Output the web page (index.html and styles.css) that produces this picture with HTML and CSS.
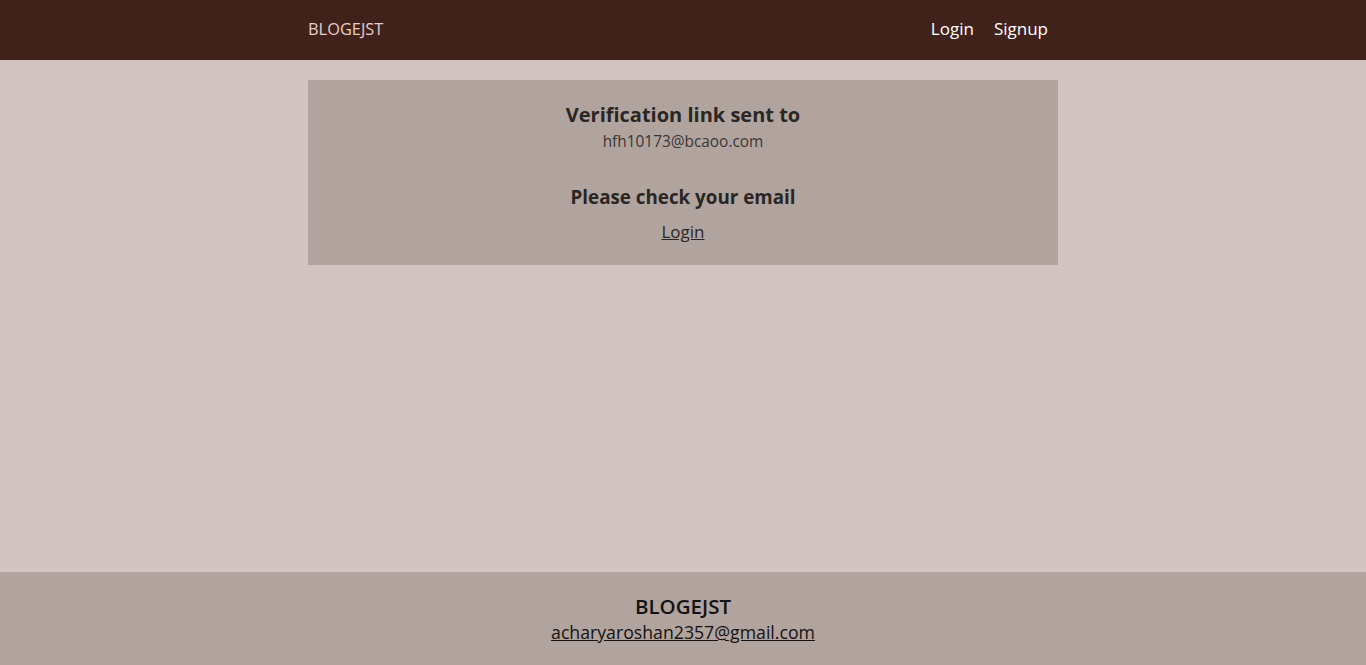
FILE: index.html
```html
<!DOCTYPE html>
<html>
<head>
<meta charset="utf-8">
<link rel="stylesheet" href="styles.css">
</head>
<body>
<header class="topbar">
  <div class="container nav">
    <a class="brand" href="#">BLOGEJST</a>
    <nav class="links">
      <a href="#">Login</a>
      <a href="#">Signup</a>
    </nav>
  </div>
</header>
<main class="main">
  <div class="container card">
    <h2 class="title">Verification link sent to</h2>
    <p class="email">hfh10173@bcaoo.com</p>
    <h3 class="check">Please check your email</h3>
    <a class="login" href="#">Login</a>
  </div>
</main>
<footer class="footer">
  <div class="foot-title">BLOGEJST</div>
  <a class="foot-mail" href="#">acharyaroshan2357@gmail.com</a>
</footer>
</body>
</html>
```
FILE: styles.css
```css
* { box-sizing: border-box; }
html, body { margin: 0; padding: 0; }
body {
  font-family: "Open Sans", "DejaVu Sans", sans-serif;
  background: #d2c4c2;
  min-height: 100vh;
  display: flex;
  flex-direction: column;
  color: #2a2624;
}
a { color: inherit; }
.container { width: 750px; margin: 0 auto; }
.topbar { background: #41221a; height: 60px; }
.nav { height: 60px; display: flex; align-items: center; justify-content: space-between; padding-right: 10px; padding-bottom: 3px; }
.brand { color: #e6cdca; text-decoration: none; font-size: 16.4px; }
.links { display: flex; gap: 20px; }
.links a { color: #ffffff; text-decoration: none; font-size: 17px; }
.main { flex: 1; padding-top: 20px; }
.card { background: #b1a49f; padding: 20px 0 21px; display: flex; flex-direction: column; align-items: center; }
.title { margin: 0; font-size: 20px; font-weight: 700; line-height: 30px; }
.email { margin: 0; font-size: 15.4px; line-height: 24px; color: #3a3636; }
.check { margin: 30px 0 0; font-size: 18.8px; font-weight: 700; line-height: 27px; }
.login { margin-top: 9px; font-size: 17px; line-height: 24px; }
.footer { background: #b1a49f; height: 93px; display: flex; flex-direction: column; align-items: center; padding-top: 21px; }
.foot-title { font-size: 20.5px; font-weight: 600; line-height: 26px; color: #141212; }
.foot-mail { font-size: 17.7px; line-height: 26px; color: #141212; }
```
